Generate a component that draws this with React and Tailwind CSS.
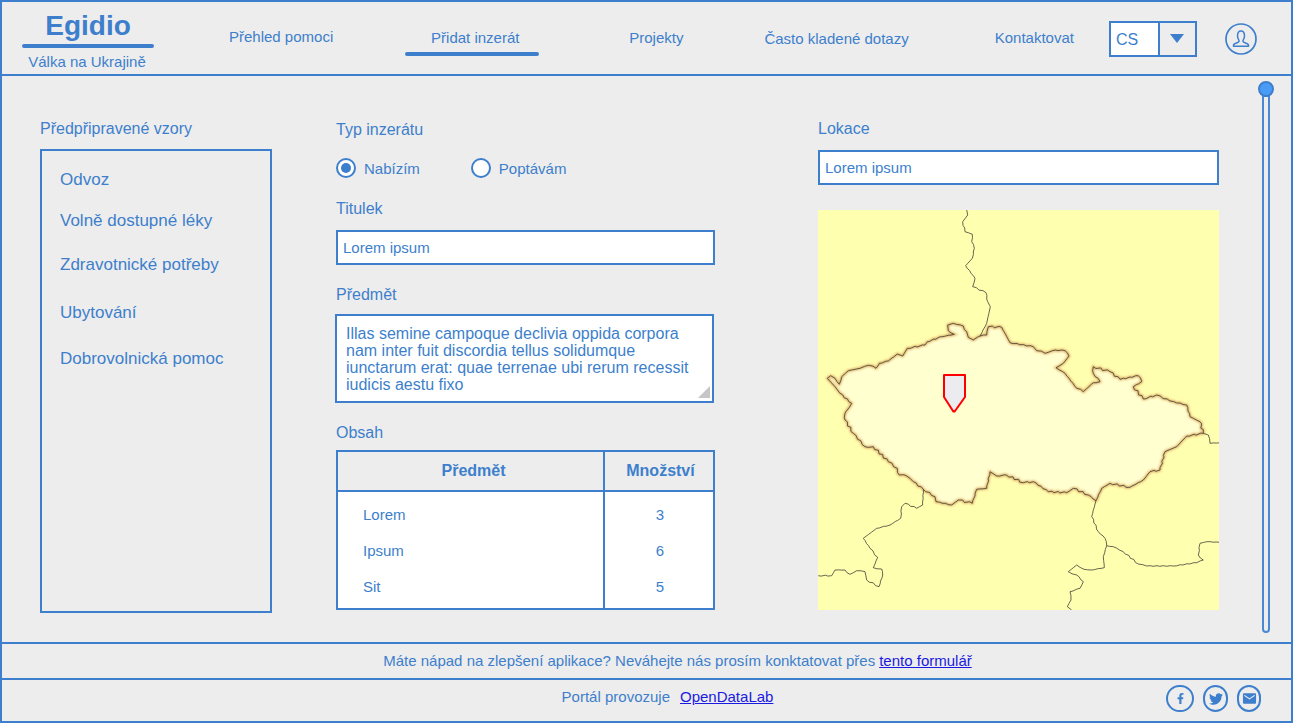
import { FaFacebookF, FaTwitter } from 'react-icons/fa';
import { IoMdMail } from 'react-icons/io';

const FONT = "font-['Liberation_Sans',Arial,sans-serif]";

// border lines traced off the map, numbers are in zoomed crop coords
const CZ_TOP = [[52,535],[62,527],[75,535],[88,553],[95,530],[115,512],[150,505],[175,496],[198,505],[208,490],[235,483],[262,462],[278,468],[292,445],[345,435],[352,425],[395,410],[433,403],[415,392],[413,375],[430,370],[460,378],[470,395],[475,412],[490,420],[505,410],[530,405],[535,380],[575,382],[585,400],[600,428],[670,440],[680,452],[705,460],[735,450],[765,452],[777,468],[760,490],[738,503],[765,520],[800,565],[820,575],[850,548],[870,545],[850,520],[850,500],[900,515],[930,538],[985,527],[995,545],[970,560],[1000,597],[1040,585],[1080,603],[1130,615],[1140,650],[1170,665]];
const CZ_BOTTOM = [[1180,100],[1130,108],[1100,140],[1065,155],[1050,210],[1020,215],[1000,240],[960,262],[900,250],[875,265],[858,302],[835,285],[790,265],[770,278],[715,275],[670,245],[640,248],[590,225],[560,228],[540,215],[530,265],[500,268],[487,310],[445,300],[425,315],[378,305],[375,290],[340,268],[310,245],[290,228],[268,225],[262,205],[235,185],[190,140],[165,140],[130,100],[105,60],[105,40],[122,15]];
const CZ_WEST = [[125,610],[90,580],[75,560]];
const NORTH = [[470,30],[473,45],[458,65],[465,95],[487,103],[485,125],[493,145],[487,175],[467,197],[495,235],[488,260],[528,278],[533,305],[541,320],[530,370],[510,408]];
const LINE_A = [[340,268],[338,315],[320,325],[285,310],[275,320],[272,355],[240,375],[200,385],[160,415],[180,445],[203,472],[190,503],[215,507],[218,525],[207,560],[170,540],[165,515],[140,512],[120,523],[105,510],[75,510],[65,527],[25,527]];
const LINE_B = [[858,302],[845,350],[865,395],[885,415],[890,437],[880,470],[883,503],[845,510],[822,508],[800,495],[775,515],[800,525],[820,545],[810,565],[780,575],[783,600],[772,620],[785,630]];
const LINE_C = [[890,437],[910,440],[940,455],[985,492],[1010,498],[1090,498],[1160,488],[1180,480],[1165,465],[1170,430],[1190,425],[1230,427]];
const LINE_D = [[1180,100],[1195,105],[1200,130],[1230,128]];

const top = (pts) => pts.map(([x, y]) => [810 + x / 3, 200 + y / 3]);
const bottom = (pts) => pts.map(([x, y]) => [810 + x / 3, 400 + y / 3]);

// breaks each segment up a little so the line looks like a real border
const rough = (pts, amount = 0.8) => {
  const out = [];
  pts.forEach((p, i) => {
    out.push(p);
    const n = pts[i + 1];
    if (!n) return;
    const len = Math.hypot(n[0] - p[0], n[1] - p[1]);
    const steps = Math.floor(len / 3);
    for (let s = 1; s < steps; s++) {
      const t = s / steps;
      const wob = Math.sin((p[0] + s) * 12.9 + (p[1] + s) * 78.2) * amount;
      out.push([p[0] + (n[0] - p[0]) * t + wob, p[1] + (n[1] - p[1]) * t - wob]);
    }
  });
  return out;
};

const toPath = (pts) => 'M' + pts.map(([x, y]) => `${x.toFixed(1)} ${y.toFixed(1)}`).join('L');

const CZ_PATH = toPath(rough([...top(CZ_TOP), ...bottom(CZ_BOTTOM), ...top(CZ_WEST)])) + 'Z';
const OTHER_LINES = [top(NORTH), bottom(LINE_A), bottom(LINE_B), bottom(LINE_C), bottom(LINE_D)].map((l) => toPath(rough(l, 0.5)));

const MapPicture = () => (
  <svg viewBox="818 210 401 400" className="block w-[401px] h-[400px] mt-[25px]">
    <defs>
      <filter id="glow" x="-10%" y="-10%" width="120%" height="120%">
        <feGaussianBlur stdDeviation="1.2" />
      </filter>
    </defs>
    <rect x="818" y="210" width="401" height="400" fill="#ffffb0" />
    <path d={CZ_PATH} fill="#ffffd0" />
    <path d={CZ_PATH} fill="none" stroke="#dfae66" strokeWidth="2.6" filter="url(#glow)" />
    <path d={CZ_PATH} fill="none" stroke="#3f3f35" strokeWidth="0.8" />
    {OTHER_LINES.map((d, i) => (
      <path key={i} d={d} fill="none" stroke="#3f3f35" strokeWidth="0.8" />
    ))}
    <path d="M944 375H965V397L955 411Q954 412 953 411L944 397Z" fill="#ebebf0" stroke="#ff0000" strokeWidth="2" strokeLinejoin="round" />
  </svg>
);

const Field = ({ value, className = '' }) => (
  <input
    readOnly
    value={value}
    className={`block h-[35px] border-2 border-[#3d7fcc] bg-white px-[5px] text-[15px] text-[#3d7fcc] outline-none ${className}`}
  />
);

const Radio = ({ checked, label }) => (
  <label className="flex h-[20px] items-center gap-[8px] text-[15px]">
    <span className="flex h-[20px] w-[20px] items-center justify-center rounded-full border-2 border-[#3d7fcc] bg-white">
      {checked && <span className="h-[10px] w-[10px] rounded-full bg-[#3d7fcc]" />}
    </span>
    <span className="pt-[2px] leading-[18px]">{label}</span>
  </label>
);

const Social = ({ className = '', children }) => (
  <span className={`flex h-[27px] items-center justify-center rounded-full border-2 border-[#3d7fcc] text-[#3d7fcc] ${className}`}>
    {children}
  </span>
);

const templates = [
  { name: 'Odvoz', cls: 'mt-[19px]' },
  { name: 'Volně dostupné léky', cls: 'mt-[21px]' },
  { name: 'Zdravotnické potřeby', cls: 'mt-[24px]' },
  { name: 'Ubytování', cls: 'mt-[28px]' },
  { name: 'Dobrovolnická pomoc', cls: 'mt-[26px]' },
];

const rows = [
  { name: 'Lorem', qty: 3, cls: 'h-[42px] pt-[4px]' },
  { name: 'Ipsum', qty: 6, cls: 'h-[36px]' },
  { name: 'Sit', qty: 5, cls: 'h-[39px] pb-[3px]' },
];

export default function App() {
  return (
    <div className={`${FONT} flex h-[723px] w-[1293px] flex-col overflow-hidden border-2 border-[#3d7fcc] bg-[#ededed] text-[#3d7fcc]`}>
      {/* Header */}
      <header className="flex h-[74px] shrink-0 border-b-2 border-[#3d7fcc]">
        <div className="ml-[20px] flex w-[132px] flex-col items-center">
          <div className="mt-[7px] h-[35px] text-[28px] font-bold leading-[34px]">Egidio</div>
          <div className="h-[4px] w-full rounded-full bg-[#3d7fcc]" />
          <div className="mt-[5px] mr-[2px] text-[15px] leading-[18px]">Válka na Ukrajině</div>
        </div>

        <nav className="flex text-[15px]">
          <a className="ml-[75px] mt-[26px] leading-[18px]">Přehled pomoci</a>
          <div className="ml-[72px] flex w-[134px] flex-col items-center">
            <a className="mt-[27px] pl-[6px] leading-[18px]">Přidat inzerát</a>
            <div className="mt-[5px] h-[4px] w-full rounded-full bg-[#3d7fcc]" />
          </div>
          <a className="ml-[90px] mt-[27px] leading-[18px]">Projekty</a>
          <a className="ml-[81px] mt-[28px] leading-[18px]">Často kladené dotazy</a>
          <a className="ml-[86px] mt-[27px] leading-[18px]">Kontaktovat</a>
        </nav>

        <div className="ml-[35px] mt-[19px] flex h-[36px] w-[88px] border-2 border-[#3d7fcc]">
          <div className="flex w-[47px] items-center bg-white pl-[5px] pt-[2px] text-[16px]">CS</div>
          <div className="flex flex-1 items-center justify-center border-l-2 border-[#3d7fcc]">
            <svg width="14" height="9" viewBox="0 0 14 9" className="mb-[2px]">
              <path d="M0 0H14L7 9Z" fill="#3d7fcc" />
            </svg>
          </div>
        </div>

        <svg width="32" height="32" viewBox="0 0 32 32" fill="none" stroke="#3d7fcc" className="ml-[28px] mt-[21px]">
          <circle cx="16" cy="16" r="15" strokeWidth="1.7" />
          <path
            d="M12.5 13c0-3 1.500-5 3.500-5s3.500 2 3.500 5c0 2-1 3.500-1.500 4.500-.4 1 .5 1.800 2 2.200 1.800.5 3.500 1 3.500 2.600v.9H8.500v-.9c0-1.600 1.700-2.100 3.500-2.600 1.500-.4 2.400-1.200 2-2.200-.5-1-1.500-2.500-1.500-4.500Z"
            strokeWidth="1.5"
            strokeLinejoin="round"
          />
        </svg>
      </header>

      {/* Main form */}
      <main className="relative flex h-[568px] shrink-0 border-b-2 border-[#3d7fcc]">
        <section className="ml-[38px] w-[232px] pt-[43px]">
          <h2 className="text-[16px] leading-[20px]">Předpřipravené vzory</h2>
          <div className="mt-[10px] h-[464px] border-2 border-[#3d7fcc] pl-[18px]">
            {templates.map((t) => (
              <div key={t.name} className={`text-[17px] leading-[20px] ${t.cls}`}>{t.name}</div>
            ))}
          </div>
        </section>

        <section className="ml-[64px] w-[379px] pt-[44px] text-[16px] leading-[20px]">
          <h2>Typ inzerátu</h2>
          <div className="mt-[18px] flex gap-[51px]">
            <Radio checked label="Nabízím" />
            <Radio label="Poptávám" />
          </div>

          <h2 className="mt-[21px]">Titulek</h2>
          <Field value="Lorem ipsum" className="mt-[11px] w-[379px]" />

          <h2 className="mt-[20px]">Předmět</h2>
          <div className="relative mt-[9px] -ml-px h-[89px] w-[379px] border-2 border-[#3d7fcc] bg-white">
            <textarea
              readOnly
              rows={4}
              className="block h-full w-full resize-none overflow-hidden bg-white pl-[9px] pr-[4px] pt-[9px] text-[16px] leading-[17px] outline-none"
              defaultValue="Illas semine campoque declivia oppida corpora nam inter fuit discordia tellus solidumque iunctarum erat: quae terrenae ubi rerum recessit iudicis aestu fixo"
            />
            <svg width="12" height="12" viewBox="0 0 12 12" className="absolute bottom-[3px] right-[2px]">
              <path d="M12 0V12H0Z" fill="#c6c6c6" />
            </svg>
          </div>

          <h2 className="mt-[20px]">Obsah</h2>
          <table className="mt-[7px] h-[160px] w-[379px] table-fixed border-collapse border-2 border-[#3d7fcc] text-[15px]">
            <thead>
              <tr className="h-[40px] border-b-2 border-[#3d7fcc] text-[16px]">
                <th className="w-[267px] border-r-2 border-[#3d7fcc] pl-[6px] font-bold">Předmět</th>
                <th className="pl-[3px] font-bold">Množství</th>
              </tr>
            </thead>
            <tbody className="bg-white">
              {rows.map((r) => (
                <tr key={r.name}>
                  <td className={`border-r-2 border-[#3d7fcc] pl-[25px] ${r.cls}`}>{r.name}</td>
                  <td className={`pl-[2px] text-center ${r.cls}`}>{r.qty}</td>
                </tr>
              ))}
            </tbody>
          </table>
        </section>

        <section className="ml-[103px] w-[401px] pt-[43px] text-[16px] leading-[20px]">
          <h2>Lokace</h2>
          <Field value="Lorem ipsum" className="mt-[11px] w-[401px]" />
          <MapPicture />
        </section>

        {/* scrollbar sits over the page */}
        <div className="absolute left-[1256px] top-[5px] flex h-[552px] w-[16px] flex-col items-center">
          <div className="z-10 h-[16px] w-[16px] shrink-0 rounded-full border-2 border-[#3d7fcc] bg-[#4a9bf5]" />
          <div className="-mt-[2px] w-[8px] flex-1 rounded-b-full border-2 border-[#4a88d4] bg-[#ededed]" />
        </div>
      </main>

      {/* Footer */}
      <div className="flex h-[36px] shrink-0 items-center justify-center border-b-2 border-[#3d7fcc] pl-[62px] text-[15px]">
        <span>Máte nápad na zlepšení aplikace? Neváhejte nás prosím konktatovat přes</span>
        <a className="ml-[4px] cursor-pointer text-[#1a1ae0] underline">tento formulář</a>
      </div>
      <footer className="relative flex min-h-0 flex-1 justify-center pl-[42px] text-[15px]">
        <div className="mt-[8px] leading-[18px]">
          Portál provozuje
          <a className="ml-[10px] cursor-pointer text-[#1a1ae0] underline">OpenDataLab</a>
        </div>
        <div className="absolute left-[1164px] top-[5px] flex gap-[9px]">
          <Social className="w-[28px]"><FaFacebookF size={11} /></Social>
          <Social className="w-[25px]"><FaTwitter size={14} /></Social>
          <Social className="w-[24px]"><IoMdMail size={15} /></Social>
        </div>
      </footer>
    </div>
  );
}
